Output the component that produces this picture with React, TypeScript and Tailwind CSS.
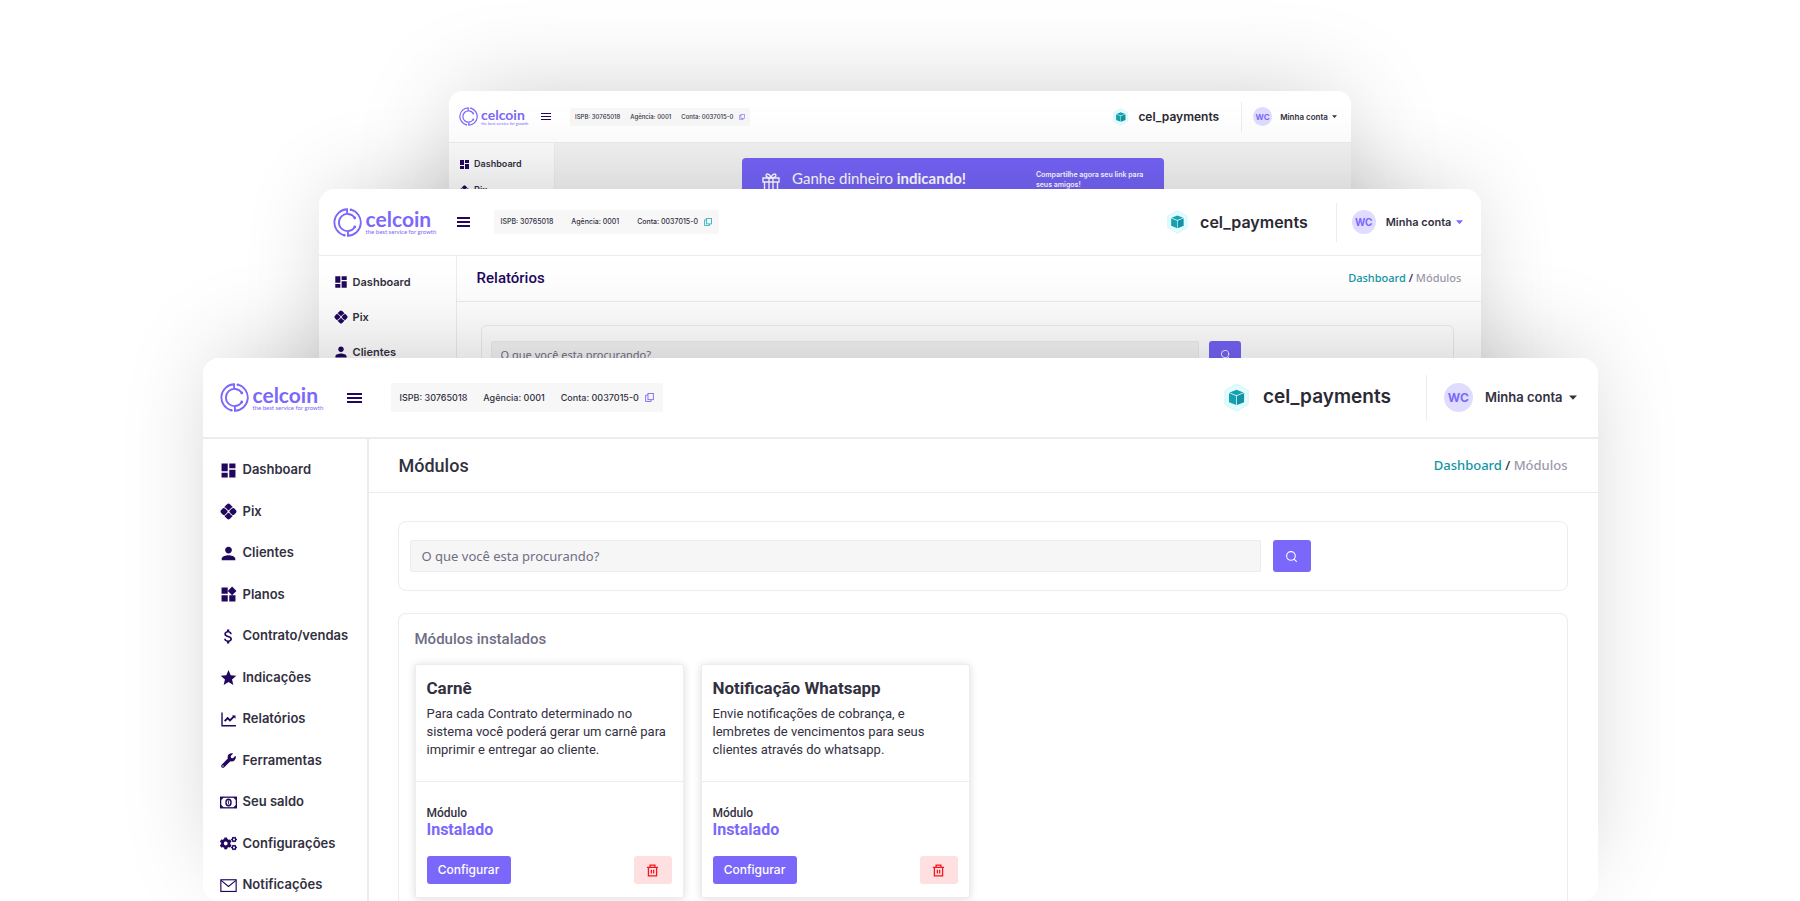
import React from "react";
import { FaWrench, FaCogs } from "react-icons/fa";
import { MdAttachMoney, MdDashboard, MdPerson, MdWidgets } from "react-icons/md";
import { IoMdStar } from "react-icons/io";
import { LuSearch } from "react-icons/lu";

type Size = "sm" | "md" | "lg";

interface IconProps {
  className?: string;
  viewBox?: string;
}

function RingIcon({ className }: IconProps) {
  return (
    <svg viewBox="0 0 28 28" fill="none" stroke="currentColor" strokeWidth="1.8" className={className}>
      <path d="M11 26.4A12.8 12.8 0 0 1 13.6 1.2V5.6" />
      <path d="M17.2 1.6A12.8 12.8 0 0 1 14.4 26.8V22.4" />
      <path d="M20.8 9.2A8.3 8.3 0 1 0 20.8 18.8" />
      <circle cx="17.2" cy="1.8" r="1.2" fill="currentColor" stroke="none" />
      <circle cx="11" cy="26.3" r="1.2" fill="currentColor" stroke="none" />
      <circle cx="21" cy="9.6" r="1.4" fill="currentColor" stroke="none" />
      <circle cx="21" cy="18.4" r="1.4" fill="currentColor" stroke="none" />
    </svg>
  );
}

function PixIcon({ className }: IconProps) {
  return (
    <svg viewBox="0 0 16 16" fill="currentColor" className={className}>
      <path d="M6.6 1.1Q8-.1 9.4 1.1L12.2 4Q11 4.2 10.2 5L8.6 6.6Q8 7.1 7.4 6.6L5.8 5Q5 4.2 3.8 4Z" />
      <path d="M6.6 14.9Q8 16.1 9.4 14.9L12.2 12Q11 11.8 10.2 11L8.6 9.4Q8 8.9 7.4 9.4L5.8 11Q5 11.8 3.8 12Z" />
      <path d="M1.1 6.6Q-.1 8 1.1 9.4L3 11.3Q4.4 11.3 5.2 10.5L7 8.6Q7.4 8 7 7.4L5.2 5.5Q4.4 4.7 3 4.7Z" />
      <path d="M14.9 6.6Q16.1 8 14.9 9.4L13 11.3Q11.6 11.3 10.8 10.5L9 8.6Q8.6 8 9 7.4L10.8 5.5Q11.6 4.7 13 4.7Z" />
    </svg>
  );
}

function ChartIcon({ className }: IconProps) {
  return (
    <svg viewBox="0 0 16 16" fill="none" stroke="currentColor" className={className}>
      <path d="M1.9 1.5V13.9H15" strokeWidth="1.3" />
      <path d="M4.4 9.6 7.2 6.6 9.4 8.8 13.4 4.8" strokeWidth="1.8" />
      <path d="M11.2 4.2H14.6V7.4Z" fill="currentColor" stroke="none" />
    </svg>
  );
}

function CashIcon({ className }: IconProps) {
  return (
    <svg viewBox="0 0 16 16" fill="none" stroke="currentColor" className={className}>
      <rect x=".6" y="3" width="14.8" height="10" strokeWidth="1.2" />
      <path d="M1 3H3.8L1 5.8ZM15 3H12.2L15 5.8ZM1 13H3.8L1 10.2ZM15 13H12.2L15 10.2Z" fill="currentColor" stroke="none" />
      <ellipse cx="8" cy="8" rx="2.4" ry="3" strokeWidth="1.3" />
      <path d="M7.4 6.8 8.1 6.4V9.6" strokeWidth=".9" />
    </svg>
  );
}

function MailIcon({ className }: IconProps) {
  return (
    <svg viewBox="0 0 16 16" fill="none" stroke="currentColor" strokeWidth="1.1" className={className}>
      <rect x=".8" y="2.6" width="14.4" height="11" />
      <path d="M1 3.2 8 9 15 3.2" />
    </svg>
  );
}

function CopyIcon({ className }: IconProps) {
  return (
    <svg viewBox="0 0 10 10" fill="none" stroke="currentColor" strokeWidth="1" className={className}>
      <rect x="3.3" y=".6" width="6" height="6.8" />
      <path d="M3.3 2.4H.7V9.4H6.8V7.4" />
    </svg>
  );
}

function TrashIcon({ className }: IconProps) {
  return (
    <svg viewBox="0 0 14 14" fill="none" stroke="currentColor" strokeWidth="1.4" className={className}>
      <path d="M1 3.6H13M4.4 3.4V1.2H9.6V3.4M2.6 3.8V12.8H11.4V3.8" />
      <path d="M5.8 6.2V10.2M8.2 6.2V10.2" />
    </svg>
  );
}

function CubeIcon({ className }: IconProps) {
  return (
    <svg viewBox="0 0 26 30" className={className}>
      <path d="M13 1 25 7.8V22.2L13 29 1 22.2V7.8Z" fill="#e3fdff" stroke="#c2f8fb" strokeWidth="1" />
      <path d="M13 7 20.2 9.8 13 12.6 5.8 9.8Z" fill="#16a0b0" />
      <path d="M5.2 10.4 12.6 13.4V22.8L5.2 19.8Z" fill="#16a0b0" />
      <path d="M20.8 10.4 13.4 13.4V22.8L20.8 19.8Z" fill="#1093a5" />
    </svg>
  );
}

function GiftIcon({ className }: IconProps) {
  return (
    <svg viewBox="0 0 18 18" fill="none" stroke="currentColor" strokeWidth="1.4" className={className}>
      <path d="M1 5H17V9H1ZM2.5 9V17H15.5V9M7 5V17M11 5V17" />
      <path d="M9 5C8 .2 3.6 0 4.2 3Q4.6 4.6 9 5C10 .2 14.4 0 13.8 3Q13.4 4.6 9 5Z" />
    </svg>
  );
}

const menu = [
  { label: "Dashboard", Icon: MdDashboard, viewBox: "1 1 22 22" },
  { label: "Pix", Icon: PixIcon, viewBox: "0 0 16 16" },
  { label: "Clientes", Icon: MdPerson, viewBox: "2 2 20 20" },
  { label: "Planos", Icon: MdWidgets, viewBox: "1 1 22 22" },
  { label: "Contrato/vendas", Icon: MdAttachMoney, viewBox: "1 1 22 22" },
  { label: "Indicações", Icon: IoMdStar, viewBox: "36 36 440 440" },
  { label: "Relatórios", Icon: ChartIcon, viewBox: "0 0 16 16" },
  { label: "Ferramentas", Icon: FaWrench, viewBox: "-40 -40 592 592" },
  { label: "Seu saldo", Icon: CashIcon, viewBox: "0 0 16 16" },
  { label: "Configurações", Icon: FaCogs, viewBox: "0 0 640 512" },
  { label: "Notificações", Icon: MailIcon, viewBox: "0 0 16 16" },
];

const modules = [
  {
    title: "Carnê",
    text: "Para cada Contrato determinado no sistema você poderá gerar um carnê para imprimir e entregar ao cliente.",
  },
  {
    title: "Notificação Whatsapp",
    text: "Envie notificações de cobrança, e lembretes de vencimentos para seus clientes através do whatsapp.",
  },
];

const headerStyles: Record<Size, Record<string, string>> = {
  sm: {
    bar: "h-[52px] border-b pl-[10px] pr-[14px]",
    logo: "gap-[3px] w-[65px]",
    ring: "size-[19px]",
    name: "text-[14px] leading-[13px]",
    tag: "text-[4px] leading-[5px]",
    menu: "ml-[17px] w-[10px] gap-[2px]",
    line: "h-[1px]",
    info: "ml-[19px] h-[18px] px-[5px] gap-[10px] text-[6px]",
    copy: "size-[6px] text-[#7b68fb]",
    cube: "h-[18px]",
    brand: "ml-[10px] text-[12px]",
    divider: "ml-[22px] h-[30px]",
    avatar: "ml-[11px] size-[19px] text-[8px]",
    account: "ml-[8px] gap-[4px] text-[8px]",
    caret: "w-[5px] text-[#33303f]",
  },
  md: {
    bar: "h-[67px] border-b pl-[14px] pr-[18px]",
    logo: "gap-[4px] w-[101px]",
    ring: "size-[29px]",
    name: "text-[21px] leading-[20px]",
    tag: "text-[6px] leading-[6px]",
    menu: "ml-[23px] w-[13px] gap-[2px]",
    line: "h-[2px]",
    info: "ml-[24px] h-[24px] px-[7px] gap-[18px] text-[7px]",
    copy: "size-[8px] text-[#16a9b8]",
    cube: "h-[24px]",
    brand: "ml-[12px] text-[16px]",
    divider: "ml-[28px] h-[39px]",
    avatar: "ml-[15px] size-[24px] text-[10px]",
    account: "ml-[10px] gap-[5px] text-[11px]",
    caret: "w-[7px] text-[#7b68fb]",
  },
  lg: {
    bar: "h-[81px] border-b-2 pl-[17px] pr-[21px]",
    logo: "gap-[4px] w-[99px]",
    ring: "size-[29px]",
    name: "text-[21px] leading-[20px]",
    tag: "text-[6px] leading-[6px]",
    menu: "ml-[28px] w-[15px] gap-[2px]",
    line: "h-[2px]",
    info: "ml-[29px] h-[29px] px-[9px] gap-[16px] text-[9px]",
    copy: "size-[9px] text-[#7b68fb]",
    cube: "h-[29px]",
    brand: "ml-[14px] text-[19px]",
    divider: "ml-[35px] h-[46px]",
    avatar: "ml-[17px] size-[29px] text-[12px]",
    account: "ml-[12px] gap-[6px] text-[13px]",
    caret: "w-[8px] text-[#33303f]",
  },
};

function Header({ size }: { size: Size }) {
  const s = headerStyles[size];
  return (
    <header className={`flex items-center border-[#ececee] bg-white ${s.bar}`}>
      <div className={`flex shrink-0 items-center text-[#7b68fb] ${s.logo}`}>
        <RingIcon className={`shrink-0 ${s.ring}`} />
        <div className="flex flex-col items-start whitespace-nowrap font-['Lato',sans-serif]">
          <span className={`font-bold ${s.name}`}>celcoin</span>
          <span className={s.tag}>the best service for growth</span>
        </div>
      </div>
      <button type="button" aria-label="Menu" className={`flex shrink-0 flex-col ${s.menu}`}>
        <span className={`w-full bg-[#21075e] ${s.line}`} />
        <span className={`w-full bg-[#21075e] ${s.line}`} />
        <span className={`w-full bg-[#21075e] ${s.line}`} />
      </button>
      <div className={`flex items-center whitespace-nowrap rounded-xs bg-[#f7f7f8] font-medium text-[#33303f] ${s.info}`}>
        <span>ISPB: 30765018</span>
        <span>Agência: 0001</span>
        <span className="flex items-center gap-[6px]">
          Conta: 0037015-0
          <button type="button" aria-label="Copiar conta">
            <CopyIcon className={s.copy} />
          </button>
        </span>
      </div>
      <div className="ml-auto flex items-center whitespace-nowrap">
        <CubeIcon className={s.cube} />
        <span className={`font-semibold text-[#2b2933] ${s.brand}`}>cel_payments</span>
        <span className={`w-px bg-[#ededf0] ${s.divider}`} />
        <span className={`flex items-center justify-center rounded-full bg-[#e0dcff] font-bold text-[#7b68fb] ${s.avatar}`}>
          WC
        </span>
        <button type="button" className={`flex items-center font-semibold text-[#33303f] ${s.account}`}>
          Minha conta
          <svg viewBox="0 0 8 5" fill="currentColor" className={s.caret}>
            <path d="M0 .4H8L4 4.8Z" />
          </svg>
        </button>
      </div>
    </header>
  );
}

const sidebarStyles: Record<Size, Record<string, string>> = {
  sm: { nav: "w-[106px] border-r pt-[15px] pl-[10px] gap-[14px]", row: "h-3 gap-[4px] text-[9px]", icon: "size-[11px]" },
  md: { nav: "w-[138px] border-r pt-[18px] pl-[15px] gap-[19px]", row: "h-4 gap-[5px] text-[11px]", icon: "size-[14px]" },
  lg: { nav: "w-[166px] border-r-2 pt-[21px] pb-[6px] pl-[17px] justify-between", row: "h-5 gap-[6px] text-[13px]", icon: "size-[17px]" },
};

function Sidebar({ size, count }: { size: Size; count: number }) {
  const s = sidebarStyles[size];
  return (
    <nav className={`flex shrink-0 flex-col border-[#ececee] bg-white/70 ${s.nav}`}>
      {menu.slice(0, count).map(({ label, Icon, viewBox }) => (
        <a key={label} href="#" className={`flex shrink-0 items-center font-semibold text-[#33303f] ${s.row}`}>
          <span className="flex shrink-0 justify-center text-[#21075e]">
            <Icon viewBox={viewBox} className={s.icon} />
          </span>
          {label}
        </a>
      ))}
    </nav>
  );
}

function Breadcrumb({ className, slash }: { className: string; slash: string }) {
  return (
    <div className={`font-['Noto_Sans',sans-serif] font-medium text-[#9c99ab] ${className}`}>
      <a href="#" className="text-[#0f95a5]">Dashboard</a>
      <span className={slash}> / </span>
      Módulos
    </div>
  );
}

function ModuleCard({ title, text }: { title: string; text: string }) {
  return (
    <article className="w-[269px] rounded-xs border border-[#ededf0] bg-white font-['Roboto',sans-serif] text-[#33303f] shadow-[0_1px_8px_rgba(0,0,0,0.14)]">
      <div className="h-[117px] border-b border-[#ececee] px-[11px] pt-[13px]">
        <h3 className="text-[17px] leading-[20px] font-bold">{title}</h3>
        <p className="mt-[7px] text-[13px] leading-[18px]">{text}</p>
      </div>
      <div className="px-[11px] pt-[24px] pb-[13px]">
        <p className="text-[12px] leading-[15px] font-medium">Módulo</p>
        <p className="text-[16px] leading-[18px] font-bold text-[#7b68fb]">Instalado</p>
        <div className="mt-[17px] flex justify-between">
          <button type="button" className="h-7 w-[84px] rounded-[3px] bg-[#7b68fb] text-center font-['Inter',sans-serif] text-[12px] font-medium text-white">
            Configurar
          </button>
          <button type="button" aria-label={`Remover ${title}`} className="flex h-7 w-[38px] items-center justify-center rounded-[3px] bg-[#ffe0e1] text-[#f5151d]">
            <TrashIcon className="size-[13px]" />
          </button>
        </div>
      </div>
    </article>
  );
}

const windowBase = "relative flex flex-col overflow-hidden bg-white";

export default function App() {
  return (
    <div className="flex min-h-screen flex-col items-center overflow-hidden bg-white pt-[91px] font-['Inter',sans-serif]">
      {/* Back window */}
      <section className={`${windowBase} -mb-[100px] h-[198px] w-[50.1%] rounded-[14px] shadow-[0_0_100px_-10px_rgba(0,0,0,0.22)]`}>
        <Header size="sm" />
        <div className="flex flex-1 bg-[#f2f2f3]">
          <Sidebar size="sm" count={2} />
          <main className="flex-1 pt-[15px]">
            <div className="mx-auto flex h-[60px] w-[53%] items-start rounded-[4px] bg-[#7463f7] pt-[12px] pl-[20px] text-white">
              <GiftIcon className="mt-[3px] size-[18px]" />
              <p className="ml-[12px] font-['Lato',sans-serif] text-[15px] leading-[16px] whitespace-nowrap">
                Ganhe dinheiro <b>indicando!</b>
              </p>
              <p className="mr-[20px] ml-auto w-[108px] text-[7px] leading-[10px] font-semibold">
                Compartilhe agora seu link para seus amigos!
              </p>
            </div>
          </main>
        </div>
      </section>

      {/* Middle window */}
      <section className={`${windowBase} -mb-[100px] h-[269px] w-[64.6%] rounded-[16px] shadow-[0_-10px_90px_-15px_rgba(0,0,0,0.2)]`}>
        <Header size="md" />
        <div className="flex flex-1">
          <Sidebar size="md" count={3} />
          <main className="flex-1">
            <div className="flex h-[46px] items-center justify-between border-b border-[#ececee] px-[20px]">
              <h2 className="font-['Roboto',sans-serif] text-[15px] font-medium text-[#21075e]">Relatórios</h2>
              <Breadcrumb className="text-[11px]" slash="text-[#21075e]" />
            </div>
            <div className="mt-[23px] mr-[27px] ml-[24px] flex h-[80px] gap-[10px] rounded-[6px] border border-[#ececee] px-[9px] pt-[15px]">
              <input
                aria-label="Buscar relatórios"
                placeholder="O que você esta procurando?"
                className="h-[27px] w-[74.3%] rounded-xs border border-[#ececee] bg-[#f4f4f5] px-[9px] font-['Noto_Sans',sans-serif] text-[11px] text-[#706e84] placeholder:text-[#706e84]"
              />
              <button type="button" aria-label="Buscar" className="flex h-[27px] w-[32px] items-center justify-center rounded-[3px] bg-[#7463f7] text-white">
                <LuSearch className="size-[11px]" />
              </button>
            </div>
          </main>
        </div>
      </section>

      {/* Front window */}
      <section className={`${windowBase} w-[77.5%] rounded-[16px] shadow-[0_-20px_90px_-20px_rgba(0,0,0,0.22)]`}>
        <Header size="lg" />
        <div className="flex flex-1">
          <Sidebar size="lg" count={11} />
          <main className="flex-1">
            <div className="flex h-[54px] items-center justify-between border-b border-[#ececee] px-[30px]">
              <h1 className="font-['Roboto',sans-serif] text-[18px] font-medium text-[#33303f]">Módulos</h1>
              <Breadcrumb className="text-[13px]" slash="text-[#33303f]" />
            </div>
            <div className="mr-[30px] ml-[29px]">
              <div className="mt-[28px] flex h-[70px] items-center gap-[12px] rounded-[8px] border border-[#ececee] px-[11px]">
                <input
                  aria-label="Buscar módulos"
                  placeholder="O que você esta procurando?"
                  className="h-8 w-[74.3%] rounded-xs border border-[#ececee] bg-[#f6f6f7] px-[11px] font-['Noto_Sans',sans-serif] text-[13px] text-[#706e84] placeholder:text-[#706e84]"
                />
                <button type="button" aria-label="Buscar" className="flex h-8 w-[38px] items-center justify-center rounded-[3px] bg-[#7b68fb] text-white">
                  <LuSearch className="size-[13px]" />
                </button>
              </div>
              <div className="mt-[22px] rounded-t-[8px] border border-b-0 border-[#ececee] px-[16px] pt-[15px] pb-[3px]">
                <h2 className="font-['Roboto',sans-serif] text-[15px] leading-[20px] font-medium text-[#706e84]">Módulos instalados</h2>
                <div className="mt-[15px] flex gap-[17px]">
                  {modules.map((module) => (
                    <ModuleCard key={module.title} title={module.title} text={module.text} />
                  ))}
                </div>
              </div>
            </div>
          </main>
        </div>
      </section>
    </div>
  );
}
